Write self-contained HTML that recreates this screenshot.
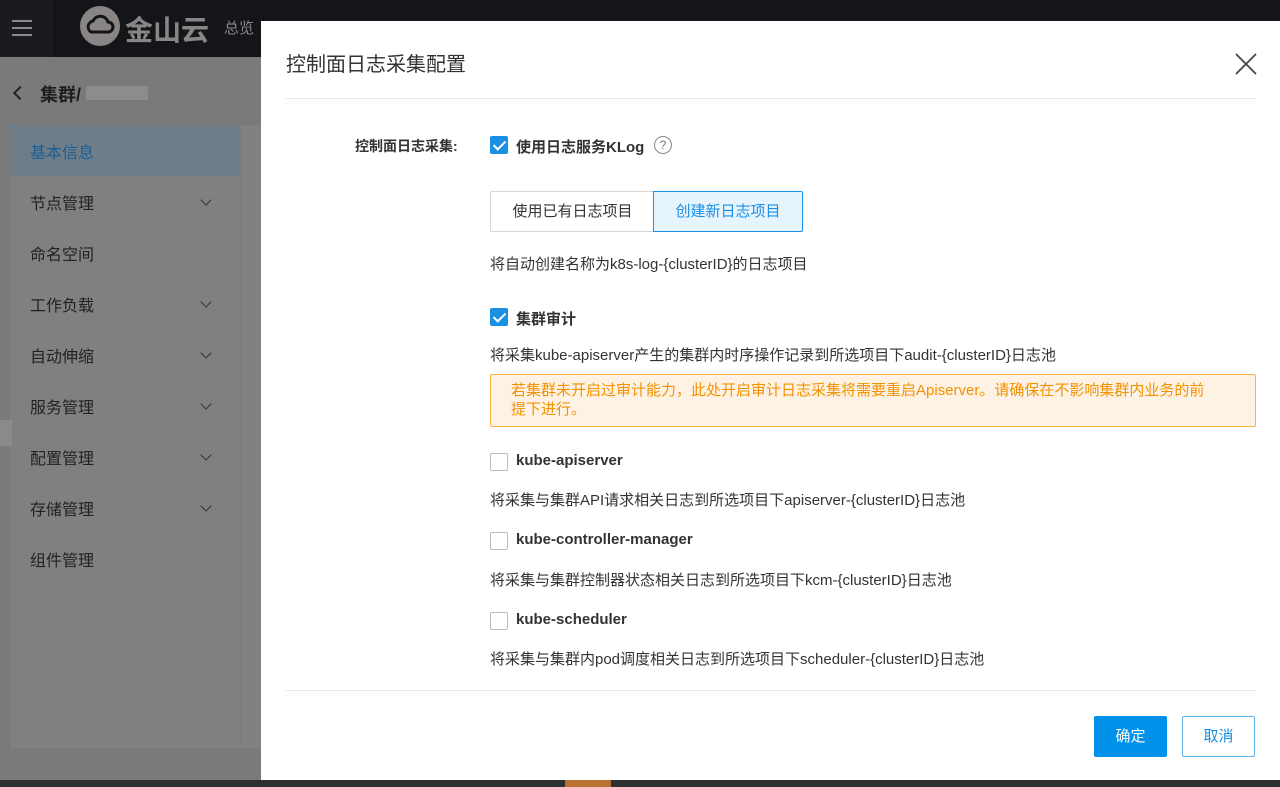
<!DOCTYPE html>
<html><head><meta charset="utf-8"><style>
*{margin:0;padding:0;box-sizing:border-box}
body{width:1280px;height:787px;overflow:hidden;position:relative;background:#7a7a7a;font-family:"Liberation Sans","Noto Sans CJK SC",sans-serif;}
.top{position:absolute;left:0;top:0;width:1280px;height:57px;background:#141519}
.ham{position:absolute;left:0;top:0;width:53px;height:57px;background:#1a1b1f}
.ham i{position:absolute;left:12px;width:20px;height:2px;background:#8a8a8a}
.bottom{position:absolute;left:0;top:780px;width:1280px;height:7px;background:#2e3030}
.side{position:absolute;left:10px;top:125px;width:230px;height:623px;background:#808080}
.side2{position:absolute;left:241px;top:125px;width:20px;height:623px;background:#818181}
.mi{position:absolute;left:20px;font-size:16px;color:#222}
.chev{position:absolute;left:192px;width:8px;height:8px;border-right:1.5px solid #333;border-bottom:1.5px solid #333;transform:rotate(45deg)}
.dlg{position:absolute;left:261px;top:21px;width:1019px;height:759px;background:#fff}
.t{position:absolute;font-size:14px;color:#333;white-space:nowrap}
.b{font-weight:bold;font-size:15px}
.cb{position:absolute;width:18px;height:18px;border-radius:2px}
.cb.on{background:#1a8fe3}
.cb.on:after{content:"";position:absolute;left:6px;top:2px;width:5px;height:10px;border-right:2px solid #fff;border-bottom:2px solid #fff;transform:rotate(45deg)}
.cb.off{border:1px solid #bbb;background:#fff}
</style></head><body>
<div class="top"><div class="ham"><i style="top:20px"></i><i style="top:27px"></i><i style="top:34px"></i></div>
<svg style="position:absolute;left:80px;top:6px" width="40" height="40"><circle cx="20" cy="20" r="20" fill="#8a8585"/><path d="M11 26a6 6 0 0 1 2-11a8 8 0 0 1 15 1a5 5 0 0 1 0 10z" fill="none" stroke="#141519" stroke-width="3"/></svg>
<div style="position:absolute;left:125px;top:9px;font-size:28px;font-weight:bold;color:#878787">金山云</div>
<div style="position:absolute;left:224px;top:17px;font-size:15px;color:#878787">总览</div></div>
<div style="position:absolute;left:15px;top:88px;width:10px;height:10px;border-left:2px solid #222;border-bottom:2px solid #222;transform:rotate(45deg)"></div>
<div style="position:absolute;left:40px;top:81px;font-size:18px;font-weight:bold;color:#1e1e1e">集群/</div>
<div style="position:absolute;left:86px;top:86px;width:62px;height:14px;background:#8c8c8c"></div>
<div class="side">
<div style="position:absolute;left:0;top:0;width:230px;height:51px;background:#6f7d89"></div>
<div class="mi" style="top:14px;color:#1a5f95">基本信息</div>
<div class="mi" style="top:65px">节点管理</div><div class="chev" style="top:71px"></div>
<div class="mi" style="top:116px">命名空间</div>
<div class="mi" style="top:167px">工作负载</div><div class="chev" style="top:173px"></div>
<div class="mi" style="top:218px">自动伸缩</div><div class="chev" style="top:224px"></div>
<div class="mi" style="top:269px">服务管理</div><div class="chev" style="top:275px"></div>
<div class="mi" style="top:320px">配置管理</div><div class="chev" style="top:326px"></div>
<div class="mi" style="top:371px">存储管理</div><div class="chev" style="top:377px"></div>
<div class="mi" style="top:422px">组件管理</div>
</div>
<div class="side2"></div>
<div style="position:absolute;left:0;top:420px;width:12px;height:26px;background:#8a8a8a"></div>
<div class="bottom"></div>
<div style="position:absolute;left:565px;top:780px;width:46px;height:7px;background:#b87333"></div>
<div class="dlg">
<div class="t" style="left:25px;top:27px;font-size:20px;color:#333">控制面日志采集配置</div>
<svg style="position:absolute;left:973px;top:31px" width="24" height="24"><path d="M2 2L22 22M22 2L2 22" stroke="#444" stroke-width="1.8"/></svg>
<div style="position:absolute;left:25px;top:77px;width:970px;height:1px;background:#e8e8e8"></div>
<div class="t b" style="left:94px;top:115px;font-size:14px">控制面日志采集:</div>
<div class="cb on" style="left:229px;top:115px"></div>
<div class="t b" style="left:255px;top:115px">使用日志服务KLog</div>
<div style="position:absolute;left:393px;top:115px;width:18px;height:18px;border:1px solid #888;border-radius:50%;font-size:12px;color:#777;text-align:center;line-height:16px">?</div>
<div style="position:absolute;left:229px;top:170px;width:164px;height:41px;border:1px solid #d6d6d6;border-right:none;border-radius:2px 0 0 2px;font-size:15px;color:#333;text-align:center;line-height:39px">使用已有日志项目</div>
<div style="position:absolute;left:392px;top:170px;width:150px;height:41px;border:1px solid #1a8fe3;background:#e6f4fe;border-radius:0 2px 2px 0;font-size:15px;color:#1a8fe3;text-align:center;line-height:39px">创建新日志项目</div>
<div class="t" style="left:229px;top:232px;font-size:15px">将自动创建名称为k8s-log-{clusterID}的日志项目</div>
<div class="cb on" style="left:229px;top:287px"></div>
<div class="t b" style="left:255px;top:287px">集群审计</div>
<div class="t" style="left:229px;top:323px;font-size:15px">将采集kube-apiserver产生的集群内时序操作记录到所选项目下audit-{clusterID}日志池</div>
<div style="position:absolute;left:229px;top:353px;width:766px;height:53px;border:1px solid #fbb24c;background:#fef2e4;border-radius:2px;padding:6px 20px 6px 20px;font-size:15px;line-height:19px;color:#f39200">若集群未开启过审计能力，此处开启审计日志采集将需要重启Apiserver。请确保在不影响集群内业务的前<br>提下进行。</div>
<div class="cb off" style="left:229px;top:432px"></div>
<div class="t b" style="left:255px;top:431px">kube-apiserver</div>
<div class="t" style="left:229px;top:468px;font-size:15px">将采集与集群API请求相关日志到所选项目下apiserver-{clusterID}日志池</div>
<div class="cb off" style="left:229px;top:511px"></div>
<div class="t b" style="left:255px;top:510px">kube-controller-manager</div>
<div class="t" style="left:229px;top:548px;font-size:15px">将采集与集群控制器状态相关日志到所选项目下kcm-{clusterID}日志池</div>
<div class="cb off" style="left:229px;top:591px"></div>
<div class="t b" style="left:255px;top:590px">kube-scheduler</div>
<div class="t" style="left:229px;top:627px;font-size:15px">将采集与集群内pod调度相关日志到所选项目下scheduler-{clusterID}日志池</div>
<div style="position:absolute;left:25px;top:669px;width:970px;height:1px;background:#e8e8e8"></div>
<div style="position:absolute;left:833px;top:695px;width:73px;height:41px;background:#0091ea;color:#fff;font-size:15px;text-align:center;line-height:41px;border-radius:2px">确定</div>
<div style="position:absolute;left:921px;top:695px;width:73px;height:41px;border:1px solid #5fb4f0;color:#1a8fe3;font-size:15px;text-align:center;line-height:39px;border-radius:2px">取消</div>
</div>
</body></html>
